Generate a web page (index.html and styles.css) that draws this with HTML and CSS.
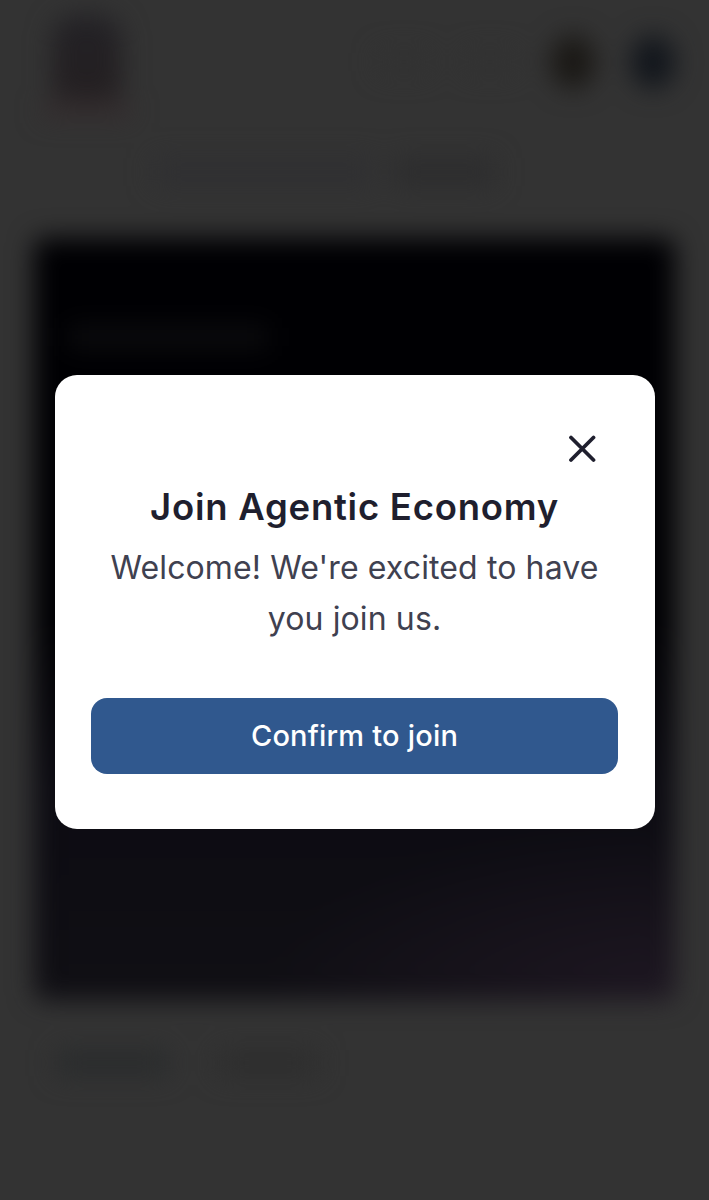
FILE: index.html
```html
<!DOCTYPE html>
<html lang="en">
<head>
    <meta charset="UTF-8">
    <meta name="viewport" content="width=device-width, initial-scale=1.0">
    <title>Join Agentic Economy</title>
    <link rel="stylesheet" href="styles.css">
</head>
<body>
    <!-- page behind the dialog, blurred out -->
    <div class="page">
        <header class="top-bar">
            <div class="logo">
                <div class="logo-mark"></div>
                <div class="logo-name"></div>
            </div>
            <nav class="top-nav">
                <span class="nav-link"></span>
                <span class="nav-link"></span>
                <span class="avatar avatar-brown"></span>
                <span class="avatar avatar-blue"></span>
            </nav>
        </header>
        <div class="headline">
            <span class="headline-a"></span>
            <span class="headline-b"></span>
        </div>
        <section class="hero">
            <div class="hero-title"></div>
        </section>
        <div class="tabs">
            <span class="tab tab-active"></span>
            <span class="tab"></span>
        </div>
    </div>

    <div class="overlay">
        <div class="dialog">
            <button class="close" type="button" aria-label="Close">
                <svg width="28" height="28" viewBox="0 0 28 28" fill="none" stroke="#1f1f2e" stroke-width="3.8" stroke-linecap="round">
                    <path d="M3 2.5L25.5 25M25.5 2.5L3 25"/>
                </svg>
            </button>
            <h2>Join Agentic Economy</h2>
            <p>Welcome! We're excited to have you join us.</p>
            <button class="confirm" type="button">Confirm to join</button>
        </div>
    </div>
</body>
</html>
```

FILE: styles.css
```css
* {
    box-sizing: border-box;
}
html, body {
    margin: 0;
    height: 1200px;
    overflow: hidden;
    background: #333333;
}
body {
    position: relative;
    font-family: Inter, "Noto Sans", sans-serif;
}
.page {
    height: 1200px;
    padding: 0 34px;
    filter: blur(13px);
}
.top-bar {
    height: 130px;
    display: flex;
    justify-content: space-between;
    padding: 15px 0 0 8px;
}
.logo {
    width: 90px;
}
.logo-mark {
    width: 70px;
    height: 84px;
    margin-left: 10px;
    background: linear-gradient(#232226, #241f21);
    border-radius: 24px 24px 10px 10px;
}
.logo-name {
    height: 12px;
    margin-top: 6px;
    background: #342a2c;
}
.top-nav {
    display: flex;
    align-items: center;
    gap: 36px;
    height: 94px;
}
.nav-link {
    width: 50px;
    height: 22px;
    background: #323232;
}
.avatar {
    width: 44px;
    height: 54px;
    border-radius: 50%;
}
.avatar-brown {
    background: #1a1815;
}
.avatar-blue {
    background: #12161c;
}
.headline {
    height: 108px;
    display: flex;
    gap: 20px;
    padding: 28px 0 0 120px;
}
.headline-a {
    width: 220px;
    height: 28px;
    background: #303032;
}
.headline-b {
    width: 100px;
    height: 28px;
    background: #2d2d2e;
}
.hero {
    height: 762px;
    padding: 88px 0 0 34px;
    border-radius: 10px;
    background:
        radial-gradient(ellipse 420px 180px at 100% 100%, #1e1722 0%, rgba(30, 23, 34, 0) 100%),
        linear-gradient(#000003 0%, #000003 50%, #0c0b12 72%, #100f14 100%);
}
.hero-title {
    width: 200px;
    height: 22px;
    background: #0c0c0e;
}
.tabs {
    display: flex;
    gap: 50px;
    padding: 50px 0 0 22px;
}
.tab {
    width: 100px;
    height: 26px;
    background: #2e2e2e;
}
.tab-active {
    width: 112px;
    background: #2a2c2d;
}

.overlay {
    position: absolute;
    top: 0;
    left: 0;
    width: 100%;
    padding: 375px 54px 0 55px;
}
.dialog {
    display: flex;
    flex-direction: column;
    align-items: center;
    height: 454px;
    padding: 60px 37px 0 36px;
    background: #ffffff;
    border-radius: 22px;
}
.close {
    align-self: flex-end;
    width: 28px;
    height: 28px;
    margin-right: 22px;
    padding: 0;
    background: none;
    border: none;
    display: block;
}
.close svg {
    display: block;
}
h2 {
    margin: 22px 0 0;
    font-size: 36.5px;
    line-height: 44px;
    font-weight: 600;
    letter-spacing: 0.75px;
    color: #1f1f2e;
    text-align: center;
}
p {
    width: 527px;
    margin: 13px 0 0;
    font-size: 32px;
    line-height: 51px;
    letter-spacing: 0.12px;
    color: #3f4150;
    text-align: center;
}
.confirm {
    width: 100%;
    height: 76px;
    margin-top: 54px;
    padding-bottom: 3px;
    background: #30588e;
    color: #ffffff;
    border: none;
    border-radius: 16px;
    font-family: inherit;
    font-size: 29px;
    font-weight: 500;
    letter-spacing: 0.2px;
}
```
